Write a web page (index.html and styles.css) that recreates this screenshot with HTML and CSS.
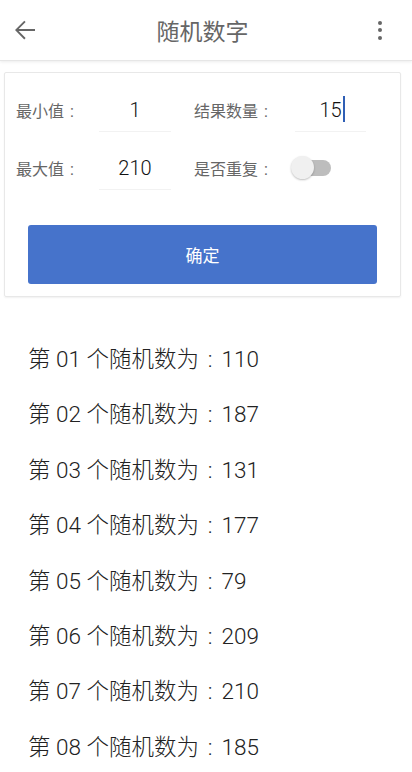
FILE: index.html
```html
<!DOCTYPE html>
<html lang="zh-CN">
<head>
    <meta charset="UTF-8">
    <meta name="viewport" content="width=device-width, initial-scale=1.0">
    <title>随机数字</title>
    <link rel="stylesheet" href="styles.css">
</head>
<body>
    <header class="toolbar">
        <span class="toolbar-btn">
            <svg width="30" height="30" viewBox="0 0 24 24"><path d="M20 11.2H6.9l5.6-5.6-1.1-1.1L4 12l7.4 7.5 1.1-1.1-5.6-5.6H20z" fill="#666"/></svg>
        </span>
        <h1 class="toolbar-title">随机数字</h1>
        <span class="toolbar-btn menu">
            <i></i><i></i><i></i>
        </span>
    </header>

    <div class="card">
        <div class="form-row">
            <label class="field-label">最小值<span class="colon">:</span></label>
            <div class="field-input">1</div>
            <span></span>
            <label class="field-label">结果数量<span class="colon">:</span></label>
            <div class="field-input">15<span class="caret"></span></div>
        </div>
        <div class="form-row">
            <label class="field-label">最大值<span class="colon">:</span></label>
            <div class="field-input">210</div>
            <span></span>
            <label class="field-label">是否重复<span class="colon">:</span></label>
            <div class="switch"><span class="thumb"></span></div>
        </div>
        <button type="button" class="btn-ok">确定</button>
    </div>

    <ul class="result-list">
        <li>第 01 个随机数为<span class="colon">:</span>110</li>
        <li>第 02 个随机数为<span class="colon">:</span>187</li>
        <li>第 03 个随机数为<span class="colon">:</span>131</li>
        <li>第 04 个随机数为<span class="colon">:</span>177</li>
        <li>第 05 个随机数为<span class="colon">:</span>79</li>
        <li>第 06 个随机数为<span class="colon">:</span>209</li>
        <li>第 07 个随机数为<span class="colon">:</span>210</li>
        <li>第 08 个随机数为<span class="colon">:</span>185</li>
    </ul>
</body>
</html>
```

FILE: styles.css
```css
body {
    margin: 0;
    background-color: #fff;
    font-family: Roboto, "Noto Sans CJK SC", sans-serif;
    overflow: hidden;
}
.toolbar {
    height: 60px;
    display: flex;
    align-items: center;
    justify-content: space-between;
    padding: 0 10px;
    border-bottom: 1px solid #e6e6e6;
    box-shadow: 0 1px 3px rgba(0, 0, 0, 0.08);
}
.toolbar-btn {
    width: 30px;
    height: 30px;
    display: flex;
    align-items: center;
    justify-content: center;
}
.toolbar-title {
    margin: 0;
    font-size: 23px;
    font-weight: normal;
    color: #666;
}
.menu {
    flex-direction: column;
    gap: 3.5px;
    margin-right: 7px;
}
.menu i {
    width: 4px;
    height: 4px;
    border-radius: 50%;
    background-color: #666;
}
/* 全角冒号：居中的冒号 */
.colon {
    display: inline-block;
    width: 1em;
    text-align: center;
}
.card {
    margin: 11px 11px 0 4px;
    padding: 8px 0 12px;
    border: 1px solid #e8e8e8;
    border-radius: 2px;
    box-shadow: 0 1px 2px rgba(0, 0, 0, 0.06);
}
.form-row {
    height: 58px;
    display: grid;
    grid-template-columns: 83px 72px 23px 101px 71px;
    align-items: center;
    padding-left: 11px;
}
.field-label {
    font-size: 16px;
    color: #666;
    white-space: nowrap;
}
.field-input {
    height: 42px;
    line-height: 42px;
    text-align: center;
    font-size: 20px;
    font-weight: 300;
    color: #111;
    border-bottom: 1px solid #f2f2f2;
}
.caret {
    display: inline-block;
    width: 2px;
    height: 26px;
    background-color: #2f5fb5;
    vertical-align: -5px;
    margin-left: 1px;
    margin-right: -3px;
}
.switch {
    width: 36px;
    height: 16px;
    border-radius: 8px;
    background-color: #bdbdbd;
    position: relative;
}
.switch .thumb {
    position: absolute;
    left: -4px;
    top: -4px;
    width: 23px;
    height: 23px;
    border-radius: 50%;
    background-color: #f0f0f0;
    box-shadow: 0 1px 2px rgba(0, 0, 0, 0.25);
}
.btn-ok {
    display: block;
    width: calc(100% - 46px);
    height: 59px;
    margin: 28px auto 0;
    border: none;
    border-radius: 3px;
    background-color: #4673cb;
    color: #fff;
    font-family: inherit;
    font-size: 17px;
}
.result-list {
    list-style: none;
    margin: 0;
    padding: 35px 0 0 28px;
}
.result-list li {
    height: 55.4px;
    line-height: 55.4px;
    font-size: 22.5px;
    font-weight: 300;
    color: #222;
}
```
